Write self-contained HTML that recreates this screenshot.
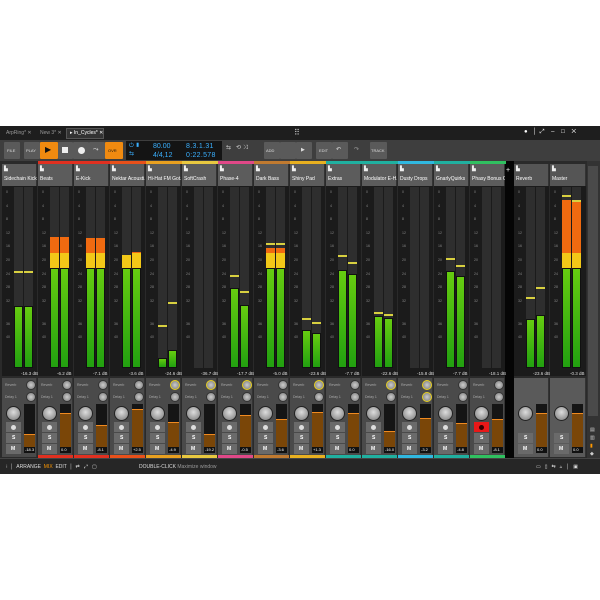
<!DOCTYPE html>
<html><head><meta charset="utf-8">
<style>
*{margin:0;padding:0;box-sizing:border-box}
body{width:600px;height:600px;background:#fff;position:relative;overflow:hidden;font-family:"Liberation Sans",sans-serif}
#app{position:absolute;left:0;top:126px;width:600px;height:348px;background:#2a2a2a;overflow:hidden}
.a{position:absolute}
.t{font-size:5px;color:#ddd;white-space:nowrap}
.btn{position:absolute;background:#5a5a5a;border-radius:1px}
</style></head><body>
<div id="app">
 <div class="a" style="left:0;top:0;width:600px;height:14px;background:#1e1e1e"></div>
 <div class="a t" style="left:6px;top:4px;color:#999">ArpRing* ✕</div>
 <div class="a t" style="left:40px;top:4px;color:#999">New 3* ✕</div>
 <div class="a" style="left:66px;top:2px;width:38px;height:11px;background:#333;border:1px solid #555"></div>
 <div class="a t" style="left:70px;top:4px;color:#fff">▸ In_Cycles* ✕</div>
 <div class="a t" style="left:294px;top:2px;font-size:8px;color:#ccc">⠿</div>
 <div class="a t" style="left:524px;top:3px;font-size:6px;color:#fff">●&nbsp;&nbsp;&nbsp;│&nbsp;&nbsp;⤢&nbsp;&nbsp;&nbsp;&nbsp;‒&nbsp;&nbsp;&nbsp;&nbsp;□&nbsp;&nbsp;&nbsp;&nbsp;✕</div>
 <div class="a" style="left:0;top:14px;width:600px;height:21px;background:#3e3e3e"></div>
 <div class="btn" style="left:4px;top:16px;width:16px;height:17px"></div><div class="a t" style="left:7px;top:22px;font-size:4px">FILE</div>
 <div class="btn" style="left:24px;top:16px;width:16px;height:17px"></div><div class="a t" style="left:26px;top:22px;font-size:4px">PLAY</div>
 <div class="btn" style="left:40px;top:16px;width:18px;height:17px;background:#f08a10"></div><div class="a t" style="left:45px;top:19px;font-size:8px;color:#111">▶</div>
 <div class="btn" style="left:58px;top:16px;width:15px;height:17px"></div><div class="a" style="left:62px;top:21px;width:6px;height:6px;background:#eee"></div>
 <div class="btn" style="left:73px;top:16px;width:16px;height:17px"></div><div class="a" style="left:78px;top:21px;width:7px;height:7px;background:#eee;border-radius:50%"></div>
 <div class="btn" style="left:89px;top:16px;width:16px;height:17px"></div><div class="a t" style="left:93px;top:20px;font-size:7px">⤳</div>
 <div class="btn" style="left:105px;top:16px;width:18px;height:17px;background:#f08a10"></div><div class="a t" style="left:108px;top:22px;font-size:4px;color:#111">OVR</div>
 <div class="a" style="left:126px;top:15px;width:96px;height:19px;background:#141414"></div>
 <div class="a t" style="left:129px;top:17px;color:#3ab0ff;font-size:6px">⏻ ▮<br>⇆</div>
 <div class="a t" style="left:153px;top:16px;color:#3ab0ff;font-size:7px;line-height:9px">80.00<br>4/4,12</div>
 <div class="a t" style="left:186px;top:16px;color:#3ab0ff;font-size:7px;line-height:9px;letter-spacing:.3px">8.3.1.31<br>0:22.578</div>
 <div class="a t" style="left:226px;top:18px;font-size:6px;color:#ccc">⇆&nbsp;&nbsp;&nbsp;⟲&nbsp;⤨</div>
 <div class="btn" style="left:264px;top:16px;width:16px;height:17px"></div><div class="a t" style="left:266px;top:22px;font-size:4px">ADD</div>
 <div class="btn" style="left:280px;top:16px;width:16px;height:17px"></div>
 <div class="btn" style="left:296px;top:16px;width:16px;height:17px"></div><div class="a t" style="left:301px;top:21px;font-size:5px">▶</div>
 <div class="btn" style="left:316px;top:16px;width:16px;height:17px"></div><div class="a t" style="left:319px;top:22px;font-size:4px">EDIT</div>
 <div class="btn" style="left:332px;top:16px;width:16px;height:17px"></div><div class="a t" style="left:336px;top:20px;font-size:6px">↶</div>
 <div class="a t" style="left:354px;top:20px;font-size:6px;color:#999">↷</div>
 <div class="btn" style="left:370px;top:16px;width:17px;height:17px"></div><div class="a t" style="left:371px;top:22px;font-size:4px">TRACK</div>
 <div class="a" style="left:505px;top:35px;width:9px;height:297px;background:#050505"></div>
 <div class="a t" style="left:506px;top:41px;font-size:7px;color:#fff">+</div>
 <div class="a" style="left:587px;top:35px;width:13px;height:297px;background:#333"></div>
 <div class="a" style="left:588px;top:40px;width:10px;height:250px;background:#4a4a4a"></div>
 <div class="a t" style="left:590px;top:300px;font-size:5px;line-height:8px;color:#ccc">▤<br>▥<br><span style="color:#f90">▮</span><br>◆<br><span style="color:#f90">▸</span><br>✎<br><span style="color:#f90">▲</span><br><span style="color:#f90">✕</span><br>▞</div>
 <div class="a" style="left:0;top:332px;width:600px;height:16px;background:#262626;border-top:1px solid #444"></div>
 <div class="a t" style="left:6px;top:338px;font-size:5px">⁝&nbsp;&nbsp;│&nbsp;&nbsp;ARRANGE&nbsp;&nbsp;<span style="color:#f90">MIX</span>&nbsp;&nbsp;EDIT&nbsp;&nbsp;│&nbsp;&nbsp;⇄&nbsp;&nbsp;&nbsp;⤢&nbsp;&nbsp;&nbsp;▢</div>
 <div class="a t" style="left:139px;top:338px;font-size:5px">DOUBLE-CLICK <span style="color:#999">Maximize window</span></div>
 <div class="a t" style="left:536px;top:338px;font-size:5px;letter-spacing:4px">▭▯⇆▵│▣</div>
 <div id="cols"></div>
</div>
<script>
var ch=[
["Sidechain Kick",2,"",306,306,271,271,"-16.3","-18.3",0.62],
["Beats",38,"#e03020",237,237,0,0,"-6.2","0.0",0.18],
["E-Kick",74,"#e03020",238,238,0,0,"-7.1","-8.1",0.42],
["Nektar Acousti...",110,"#e8501a",255,252,0,0,"-3.6","+2.5",0.1],
["Hi-Hat FM Got...",146,"#e8a020",358,350,325,302,"-24.6","-4.9",0.36],
["SoftCrash",182,"#e8c840",999,999,0,0,"-36.7","-19.2",0.62],
["Phase-4",218,"#e04888",288,305,275,291,"-17.7","-0.5",0.22],
["Dark Bass",254,"#c07a30",248,248,243,243,"-5.0","-3.6",0.3],
["Shiny Pad",290,"#e8b020",330,333,318,322,"-23.6","+1.3",0.16],
["Extras",326,"#20b0a0",270,274,255,262,"-7.7","0.0",0.18],
["Modulator E-H...",362,"#20b0a0",316,318,312,314,"-22.6","-16.0",0.56],
["Dusty Drops",398,"#30b8e0",999,999,0,0,"-15.8","-3.2",0.28],
["GnarlyQuirks",434,"#20b0a0",271,276,258,265,"-7.7","-4.8",0.38],
["Phasy Bonus C...",470,"#30c060",999,999,0,0,"-18.1","-8.1",0.3],
["Reverb",514,"",319,315,297,287,"-23.6","0.0",0.18],
["Master",550,"",200,200,195,200,"-0.3","0.0",0.18]];
var h="",T=126;
function R(x,y,w,hh,c,extra){h+='<div class="a" style="left:'+x+'px;top:'+(y-T)+'px;width:'+w+'px;height:'+hh+'px;background:'+c+';'+(extra||'')+'"></div>';}
function X(x,y,s,st){h+='<div class="a t" style="left:'+x+'px;top:'+(y-T)+'px;'+(st||'')+'">'+s+'</div>';}
function bar(x,top){
 var b=368;R(x,187,9,181,"#2e2e2e");if(top>=b)return;
 R(x,Math.max(top,268),9,b-Math.max(top,268),"linear-gradient(#66cc10,#22a010)","border:1px solid #111");
 if(top<268)R(x,Math.max(top,253),9,268-Math.max(top,253),"#f2c818");
 if(top<253)R(x,top,9,253-top,"#f06a10");
}
ch.forEach(function(c,i){
 var x=c[1],w=(i==15)?36:35,ret=i>=14;
 if(c[2])R(x,161,w+1,3,c[2]);
 R(x,164,w,22,ret?"#555":"#5c5c5c","border-right:1px solid #333");
 X(x+2,166,"▙",'font-size:5px;color:#eee');
 X(x+2,176,c[0],'font-size:5px;color:#fff;width:'+(w-2)+'px;overflow:hidden');
 R(x,186,w,190,"#1b1b1b");
 for(var k=0;k<9;k++){var y=190+k*13.6;X(x+4,y,["0","4","8","12","16","20","24","28","32"][k],'font-size:3.5px;color:#888');}
 X(x+4,322,"36",'font-size:3.5px;color:#888');X(x+4,335,"40",'font-size:3.5px;color:#888');
 bar(x+12,c[3]);bar(x+22,c[4]);
 if(c[5])R(x+12,c[5],9,1.5,"#d8d040");
 if(c[6])R(x+22,c[6],9,1.5,"#d8d040");
 X(x+w-16,371,c[7]+" dB",'font-size:4.5px;color:#ddd');
 R(x,378,w,79,ret?"#5a5a5a":"#4a4a4a","border-right:1px solid #333");
 if(!ret){
  X(x+3,383,"Reverb",'font-size:3.5px;color:#aaa');X(x+3,395,"Delay 1",'font-size:3.5px;color:#aaa');
  var yk=(i==4||i==5||i==6||i==8||i==10||i==11);
  R(x+24,380,10,10,"radial-gradient(#ccc,#777)","border-radius:50%;border:1px solid "+(yk?"#e8d020":"#333"));
  R(x+24,392,10,10,"radial-gradient(#ccc,#777)","border-radius:50%;border:1px solid "+((i==11)?"#e8d020":"#333"));
 }
 R(x+4,406,15,15,"radial-gradient(circle at 50% 40%,#ddd,#777)","border-radius:50%;border:1px solid #222");
 var sx=x+22,sy=404,sh=49;
 R(sx,sy,11,sh,"#151515");
 var f=sy+Math.round(sh*c[9]);
 R(sx,f,11,sy+sh-f-6,"#7a4608","border-top:1px solid #f08a20");
 R(sx,sy+sh-6,11,6,"#111");X(sx+1,sy+sh-6,c[8],'font-size:4px;color:#fff');
 if(!ret){
  R(x+4,422,15,10,i==13?"#e81818":"#6a6a6a");R(x+9,425,5,5,i==13?"#300":"#ddd","border-radius:50%");
 }
 R(x+4,433,15,10,"#6a6a6a");X(x+10,435,"S",'font-size:5px;color:#fff;font-weight:bold');
 R(x+4,444,15,10,"#6a6a6a");X(x+9,446,"M",'font-size:5px;color:#fff;font-weight:bold');
 if(c[2])R(x,455,w,3,c[2]);
});
document.getElementById("cols").innerHTML=h;
</script>
</body></html>
